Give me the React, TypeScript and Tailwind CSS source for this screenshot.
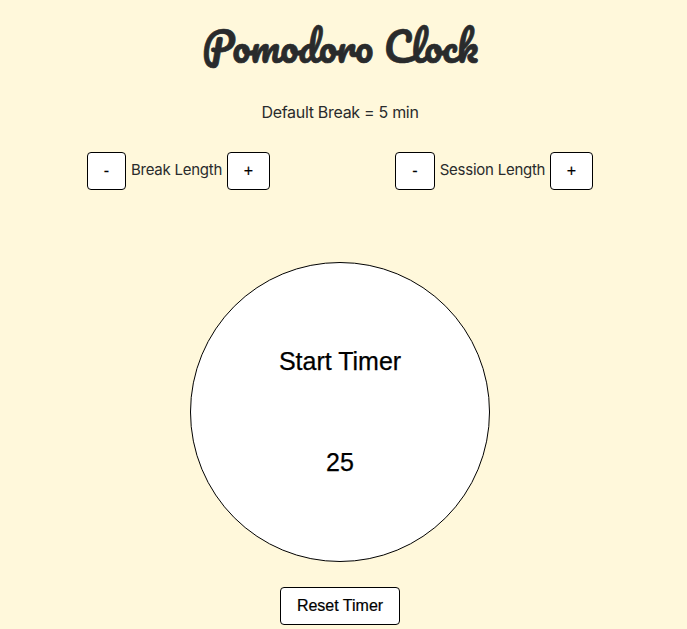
import type { ReactNode } from "react";

function Button({ children, className }: { children: ReactNode; className: string }) {
  return (
    <button
      className={`h-[38px] rounded border border-black bg-white font-['Liberation_Sans',Arial,sans-serif] text-base text-black [-webkit-text-stroke:0.2px_black] ${className}`}
    >
      {children}
    </button>
  );
}

export default function App() {
  return (
    <div className="min-h-screen bg-[#fff8db] font-[Inter,sans-serif] text-[#292b2c]">
      <main className="flex w-[680px] flex-col items-center">
        <h1 className="flex h-[91px] items-center whitespace-nowrap font-[Pacifico,cursive] text-[40px] font-normal [-webkit-text-stroke:0.7px_#292b2c]">
          Pomodoro Clock
        </h1>
        <p className="mt-[5px] h-8 text-base leading-8 tracking-[-0.3px]">Default Break = 5 min</p>
        <div className="mt-6 flex w-full pl-[87px]">
          <div className="flex w-[308px]">
            <Button className="w-[39px]">-</Button>
            <span className="w-[101px] text-center text-[15px] leading-9 tracking-[-0.25px]">Break Length</span>
            <Button className="w-[43px]">+</Button>
          </div>
          <div className="flex">
            <Button className="w-[40px]">-</Button>
            <span className="w-[115px] text-center text-[15px] leading-9 tracking-[-0.25px]">Session Length</span>
            <Button className="w-[43px]">+</Button>
          </div>
        </div>
        <button className="mt-[72px] flex h-[300px] w-[300px] flex-col items-center rounded-full border border-black bg-white pt-[79px] font-['Liberation_Sans',Arial,sans-serif] text-[25px] leading-[38px] text-black [-webkit-text-stroke:0.25px_black]">
          <span>Start Timer</span>
          <span className="mt-[63px]">25</span>
        </button>
        <Button className="mt-[25px] w-[120px]">Reset Timer</Button>
      </main>
    </div>
  );
}
